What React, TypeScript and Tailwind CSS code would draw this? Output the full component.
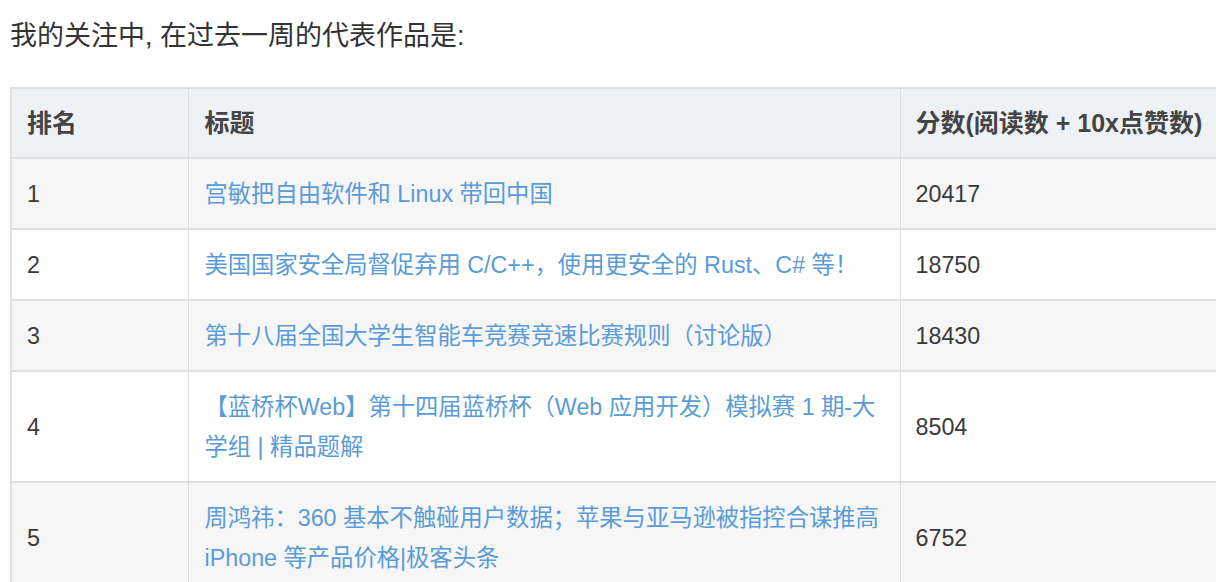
const ROWS = [
  { rank: 1, title: "宫敏把自由软件和 Linux 带回中国", score: 20417 },
  { rank: 2, title: "美国国家安全局督促弃用 C/C++，使用更安全的 Rust、C# 等！", score: 18750 },
  { rank: 3, title: "第十八届全国大学生智能车竞赛竞速比赛规则（讨论版）", score: 18430 },
  { rank: 4, title: "【蓝桥杯Web】第十四届蓝桥杯（Web 应用开发）模拟赛 1 期-大学组 | 精品题解", score: 8504 },
  { rank: 5, title: "周鸿祎：360 基本不触碰用户数据；苹果与亚马逊被指控合谋推高 iPhone 等产品价格|极客头条", score: 6752 },
];

export default function App() {
  return (
    <div
      className="w-[1216px] h-[582px] overflow-hidden bg-white text-[#333]"
      style={{ fontFamily: '"Liberation Sans", "Noto Sans CJK SC", sans-serif' }}
    >
      <p className="pl-[10px] pt-[16px] text-[27px] leading-[40px] text-[#333]">
        我的关注中, 在过去一周的代表作品是:
      </p>

      <table className="ml-[10px] mt-[31px] w-[1240px] table-fixed border-collapse border-2 border-[#dfdfdf] text-[23.3px] leading-[40px]">
        <colgroup>
          <col className="w-[177px]" />
          <col className="w-[712px]" />
          <col />
        </colgroup>
        <thead>
          <tr className="bg-[#eff2f5] text-[25px]">
            <th className="border border-[#dfdfdf] px-[15px] py-[14px] text-left font-bold text-[#444]">排名</th>
            <th className="border border-[#dfdfdf] px-[16px] py-[14px] text-left font-bold text-[#444]">标题</th>
            <th className="border border-[#dfdfdf] px-[15px] py-[14px] text-left font-bold text-[#444]">
              分数(阅读数 + 10x点赞数)
            </th>
          </tr>
        </thead>
        <tbody>
          {ROWS.map((r, i) => (
            <tr key={r.rank} className={i % 2 === 0 ? "bg-[#f6f6f6]" : "bg-white"}>
              <td className="border-x border-t-2 border-[#dfdfdf] px-[15px] pt-[15px] pb-[14px] align-middle text-[#3a3a3a]">
                {r.rank}
              </td>
              <td className="border-x border-t-2 border-[#dfdfdf] px-[16px] pt-[15px] pb-[14px] align-middle">
                <a href="#" className="text-[#5a9bd8]">{r.title}</a>
              </td>
              <td className="border-x border-t-2 border-[#dfdfdf] px-[15px] pt-[15px] pb-[14px] align-middle text-[#3a3a3a]">
                {r.score}
              </td>
            </tr>
          ))}
        </tbody>
      </table>
    </div>
  );
}
